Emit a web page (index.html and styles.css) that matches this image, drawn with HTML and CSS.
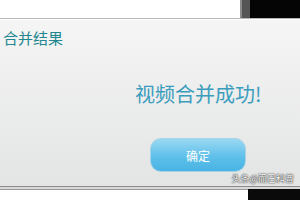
FILE: index.html
```html
<!DOCTYPE html>
<html lang="zh">
<head>
  <meta charset="UTF-8">
  <title>合并结果</title>
  <link rel="stylesheet" href="styles.css">
</head>
<body>
  <div class="screen">
    <div class="top">
      <div class="top-white"></div>
      <div class="top-grey"></div>
      <div class="top-black"></div>
    </div>

    <div class="dialog">
      <div class="title">合并结果</div>
      <div class="message">视频合并成功!</div>
      <div class="actions">
        <button class="ok">确定</button>
      </div>
      <div class="watermark">头条@而已科普</div>
    </div>

    <div class="bottom">
      <div class="bottom-white"></div>
      <div class="bottom-black"></div>
    </div>
  </div>
</body>
</html>
```

FILE: styles.css
```css
body {
  margin: 0;
  font-family: 'Noto Sans CJK SC', 'Liberation Sans', sans-serif;
}

.screen {
  width: 300px;
  height: 200px;
  display: flex;
  flex-direction: column;
  overflow: hidden;
}

.top {
  height: 18px;
  display: flex;
  border-bottom: 1px solid #b8b8b8;
}

.top-white {
  flex: 1;
  background-color: #ffffff;
}

.top-grey {
  width: 8px;
  background-color: #555555;
  border-left: 2px solid #8a8a8a;
}

.top-black {
  width: 50px;
  background-color: #050505;
}

.dialog {
  position: relative;
  height: 166px;
  background: linear-gradient(#f5f5f5, #e3e4e4);
  border-top: 1px solid #ffffff;
  border-bottom: 1px solid #8c8c8c;
  display: flex;
  flex-direction: column;
}

.title {
  margin-top: 8px;
  padding-left: 3px;
  font-size: 15px;
  line-height: 20px;
  color: #21868f;
}

.message {
  margin-top: 33px;
  padding-left: 135px;
  font-size: 20px;
  line-height: 26px;
  color: #3b9dbd;
}

.actions {
  margin-top: 31px;
  padding-left: 150px;
}

.ok {
  width: 96px;
  height: 34px;
  border: 1px solid #a6d3e6;
  border-radius: 11px;
  background: linear-gradient(#9ad8f2, #5fc0ea 55%, #48b3e3);
  color: #ffffff;
  font-family: inherit;
  font-size: 12px;
  padding: 0;
}

.watermark {
  position: absolute;
  right: 6px;
  bottom: 1px;
  font-size: 9px;
  line-height: 12px;
  color: #ffffff;
  text-shadow: 0 0 2px #333333, 0 0 1px #000000;
}

.bottom {
  flex: 1;
  display: flex;
  border-top: 2px solid #d8d8d8;
}

.bottom-white {
  flex: 1;
  background-color: #ffffff;
  border-top: 1px solid #9a9a9a;
}

.bottom-black {
  width: 52px;
  background-color: #0a0a0a;
}
```
